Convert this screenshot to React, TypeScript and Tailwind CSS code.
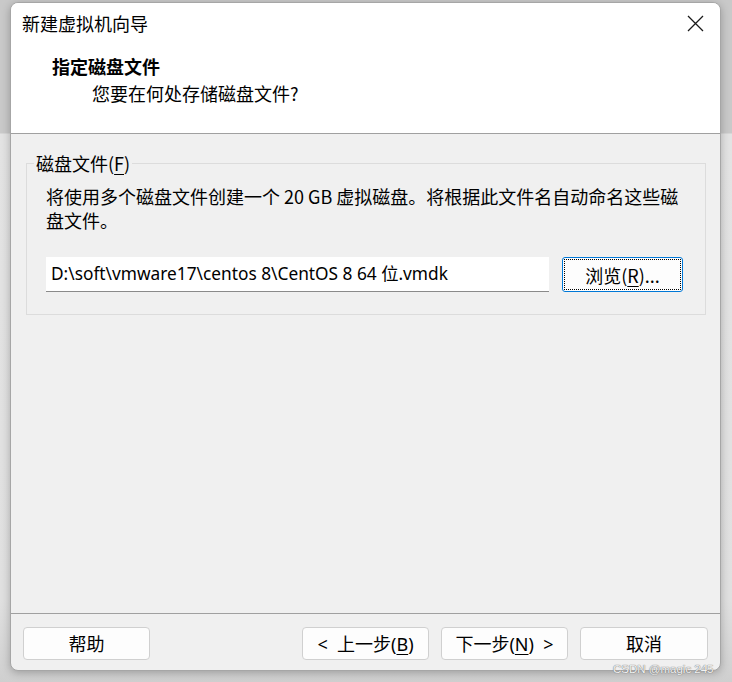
import React from "react";

const ui = { fontFamily: '"Noto Sans", "Noto Sans CJK SC", sans-serif' };
const cjk = { fontFamily: '"Noto Sans CJK SC", "Noto Sans", sans-serif' };

function Btn({ children, className = "" }: { children: React.ReactNode; className?: string }) {
  return (
    <button
      className={
        "h-[33px] w-[127px] rounded-[4px] border border-[#d0d0d0] bg-[#fdfdfd] text-[18px] leading-[24px] text-black flex items-center justify-center " +
        className
      }
      style={ui}
    >
      {children}
    </button>
  );
}

export default function App() {
  return (
    <div
      className="relative w-[732px] h-[682px] overflow-hidden bg-[linear-gradient(to_bottom,#c9c9c9_0px,#c9c9c9_133px,#e3e3e3_134px,#e0e0e0_600px,#cfcfcf_682px)]"
      style={ui}
    >
      <div className="flex pl-[10px] pr-[11px] pt-[2px]">
        <div className="flex h-[669px] w-full flex-col overflow-hidden rounded-[8px] border border-[#a6a6a6] bg-[#f0f0f0] shadow-[0_2px_8px_rgba(0,0,0,0.25)]">
          {/* Title bar */}
          <div className="flex h-[40px] items-center justify-between bg-white pl-[11px] pr-[15px]">
            <span className="text-[18px] leading-[24px] text-black" style={cjk}>
              新建虚拟机向导
            </span>
            <svg width="17" height="17" viewBox="0 0 17 17" className="mr-[1px]">
              <path d="M1 1 L16 16 M16 1 L1 16" stroke="#1a1a1a" strokeWidth="1.3" fill="none" />
            </svg>
          </div>
          {/* Header */}
          <div className="h-[91px] border-b border-[#a0a0a0] bg-white pl-[41px] pt-[11px]" style={cjk}>
            <div className="text-[18px] font-bold leading-[24px] text-black">指定磁盘文件</div>
            <div className="mt-[3px] pl-[40px] text-[18px] leading-[24px] text-black">您要在何处存储磁盘文件?</div>
          </div>
          {/* Body */}
          <div className="flex-1 pl-[15px] pr-[14px] pt-[17px]">
            <fieldset className="border border-[#dcdcdc] pb-[22px] pl-[19px] pr-[21px]">
              <legend className="-ml-[12px] px-[2px] text-[18px] leading-[24px] text-black" style={cjk}>
                磁盘文件(<span className="underline underline-offset-[3px]">F</span>)
              </legend>
              <div className="pt-[9px] text-[18px] leading-[24px] text-black" style={cjk}>
                <div>将使用多个磁盘文件创建一个 20 GB 虚拟磁盘。将根据此文件名自动命名这些磁</div>
                <div>盘文件。</div>
              </div>
              <div className="mt-[25px] flex items-center gap-[13px]">
                <div className="flex h-[35px] w-[503px] items-center border-b border-[#8a8a8a] bg-white pl-[5px] text-[17.3px] text-black">
                  <span style={ui}>D:\soft\vmware17\centos 8\CentOS 8 64 位.vmdk</span>
                </div>
                <div className="h-[35px] w-[121px] rounded-[3px] border border-[#0078d7] bg-[#fdfdfd] p-[1px]">
                  <div
                    className="flex h-full w-full items-center justify-center border border-dotted border-black text-[18px] leading-[24px] text-black"
                    style={cjk}
                  >
                    浏览(<span className="underline underline-offset-[3px]">R</span>)...
                  </div>
                </div>
              </div>
            </fieldset>
          </div>
          {/* Footer */}
          <div className="flex h-[57px] items-start border-t border-[#a0a0a0] pl-[12px] pr-[12px] pt-[13px]">
            <Btn>帮助</Btn>
            <div className="flex-1" />
            <div className="flex gap-[12px]">
              <Btn>
                &lt;&nbsp; 上一步(<span className="underline underline-offset-[3px]">B</span>)
              </Btn>
              <Btn>
                下一步(<span className="underline underline-offset-[3px]">N</span>)&nbsp; &gt;
              </Btn>
              <Btn className="w-[128px]">取消</Btn>
            </div>
          </div>
        </div>
      </div>
      <div
        className="absolute left-[613px] top-[662px] text-[11.5px] leading-[14px] text-[#f2f2f2] [text-shadow:0_0_1px_#777,0_0_1px_#777]"
        style={{ fontFamily: '"Liberation Sans", sans-serif' }}
      >
        CSDN @magic 245
      </div>
    </div>
  );
}
